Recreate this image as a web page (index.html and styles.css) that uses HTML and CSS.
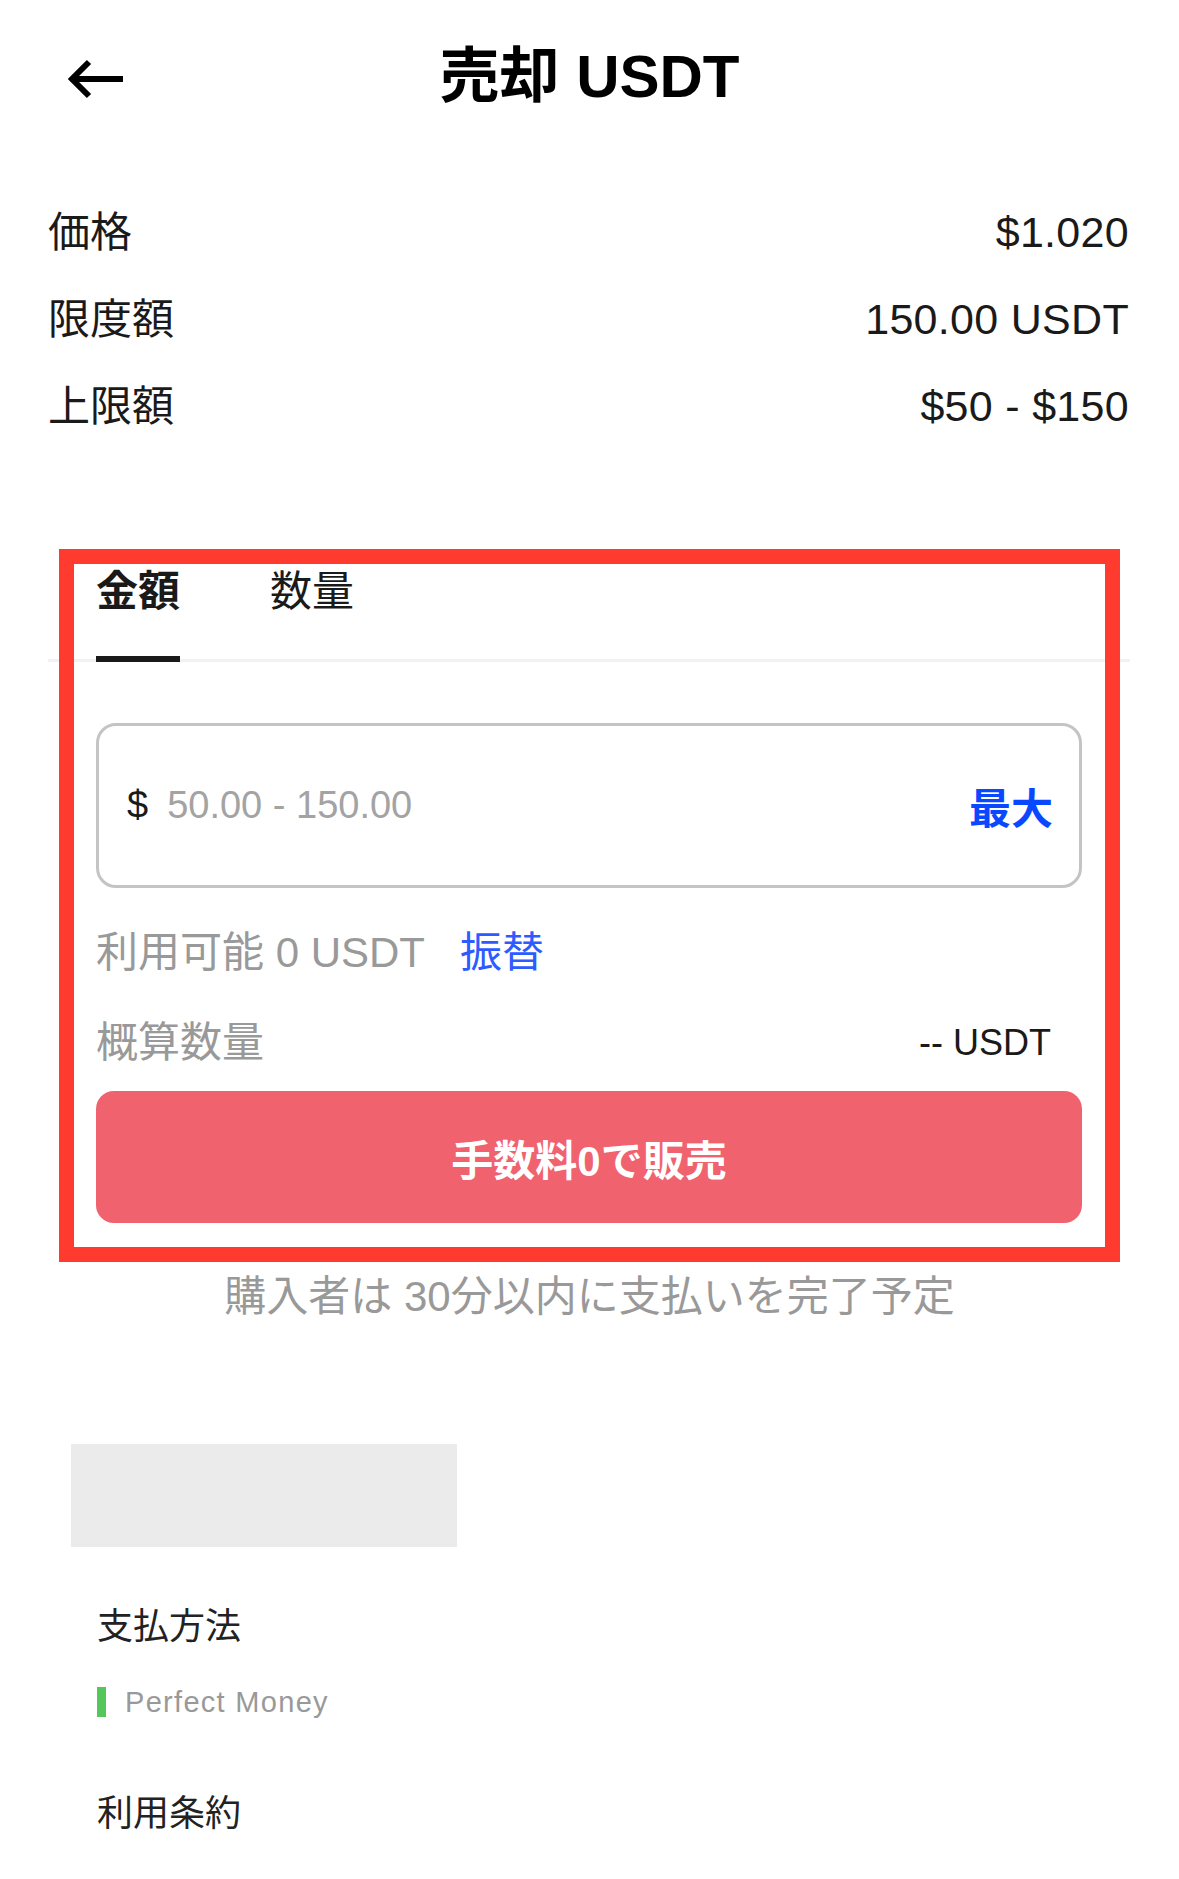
FILE: index.html
```html
<!DOCTYPE html>
<html lang="ja">
<head>
  <meta charset="UTF-8">
  <meta name="viewport" content="width=device-width, initial-scale=1.0">
  <title>売却 USDT</title>
  <link rel="stylesheet" href="styles.css">
</head>
<body>
  <header class="top-bar">
    <a class="back" href="#" aria-label="戻る">
      <svg width="62" height="40" viewBox="0 0 62 40">
        <path d="M8 20 H59 M25 3 L8 20 L25 37" fill="none" stroke="#000" stroke-width="6"/>
      </svg>
    </a>
    <h1 class="title">売却 USDT</h1>
  </header>

  <div class="info">
    <div class="info-row"><span>価格</span><span class="value">$1.020</span></div>
    <div class="info-row"><span>限度額</span><span class="value">150.00 USDT</span></div>
    <div class="info-row"><span>上限額</span><span class="value">$50 - $150</span></div>
  </div>

  <section class="trade">
    <div class="tabs">
      <div class="tab active">金額</div>
      <div class="tab">数量</div>
    </div>

    <div class="amount-box">
      <span class="currency">$</span>
      <span class="placeholder">50.00 - 150.00</span>
      <a class="max" href="#">最大</a>
    </div>

    <div class="balance">
      利用可能 0 USDT <a class="transfer" href="#">振替</a>
    </div>

    <div class="estimate">
      <span>概算数量</span>
      <span class="estimate-value">-- USDT</span>
    </div>

    <button class="sell-btn">手数料0で販売</button>
  </section>

  <p class="note">購入者は 30分以内に支払いを完了予定</p>

  <div class="avatar-placeholder"></div>

  <div class="details">
    <h2 class="detail-title">支払方法</h2>
    <div class="method"><span class="method-bar"></span>Perfect Money</div>
    <h2 class="detail-title terms">利用条約</h2>
  </div>
</body>
</html>
```

FILE: styles.css
```css
body {
  margin: 0;
  font-family: "Liberation Sans", "Noto Sans CJK JP", sans-serif;
  color: #1a1a1a;
  background: #fff;
}
a {
  text-decoration: none;
}

.top-bar {
  display: grid;
  grid-template-columns: 1fr auto 1fr;
  align-items: center;
  height: 154px;
}
.back {
  display: flex;
  padding-left: 64px;
  margin-top: 4px;
}
.title {
  margin: 0;
  font-size: 60px;
  font-weight: 700;
  color: #000;
  line-height: 70px;
}

.info {
  padding: 35px 50px 0 48px;
}
.info-row {
  display: flex;
  justify-content: space-between;
  font-size: 42px;
  line-height: 87px;
}
.value {
  font-size: 43px;
  letter-spacing: 0.3px;
}

.trade {
  position: relative;
  margin: 114px 49px 0 48px;
  padding-bottom: 24px;
}
.trade::after {
  content: "";
  position: absolute;
  top: -15px;
  bottom: -15px;
  left: 11px;
  right: 10px;
  border: 15px solid #ff3b30;
  pointer-events: none;
}
.tabs {
  display: flex;
  gap: 90px;
  padding-left: 48px;
  border-bottom: 3px solid #f2f2f5;
}
.tab {
  font-size: 42px;
  line-height: 56px;
  padding-bottom: 36px;
  border-bottom: 6px solid transparent;
  margin-bottom: -3px;
}
.tab.active {
  font-weight: 700;
  border-bottom-color: #1a1a1a;
}

.amount-box {
  display: flex;
  align-items: center;
  box-sizing: border-box;
  height: 165px;
  margin: 61px 48px 0;
  padding: 0 26px 0 28px;
  border: 3px solid #c4c4c4;
  border-radius: 20px;
}
.currency {
  font-size: 38px;
  margin-right: 19px;
}
.placeholder {
  font-size: 38px;
  color: #a3a3a3;
}
.max {
  margin-left: auto;
  font-size: 42px;
  font-weight: 700;
  color: #0a48ff;
}

.balance {
  margin: 35px 48px 0;
  font-size: 42px;
  line-height: 60px;
  color: #999;
}
.transfer {
  margin-left: 24px;
  color: #2e5bff;
}

.estimate {
  display: flex;
  justify-content: space-between;
  align-items: center;
  margin: 30px 48px 0;
  padding-right: 31px;
  line-height: 60px;
  font-size: 42px;
  color: #999;
}
.estimate-value {
  font-size: 36px;
  color: #1a1a1a;
}

.sell-btn {
  display: block;
  box-sizing: border-box;
  width: calc(100% - 96px);
  height: 132px;
  margin: 18px 48px 0;
  border: none;
  border-radius: 18px;
  background: #f0626e;
  color: #fff;
  font-family: inherit;
  font-size: 42px;
  font-weight: 700;
}

.note {
  margin: 20px 0 0;
  text-align: center;
  font-size: 42px;
  line-height: 60px;
  color: #999;
}

.avatar-placeholder {
  width: 386px;
  height: 103px;
  margin: 117px 0 0 71px;
  background: #ebebeb;
}

.details {
  padding-left: 97px;
}
.detail-title {
  margin: 55px 0 0;
  font-size: 36px;
  font-weight: 400;
  line-height: 50px;
  color: #222;
}
.detail-title.terms {
  margin-top: 62px;
}
.method {
  display: flex;
  align-items: center;
  margin-top: 25px;
  font-size: 29px;
  letter-spacing: 1.3px;
  line-height: 50px;
  color: #999;
}
.method-bar {
  width: 9px;
  height: 30px;
  margin-right: 19px;
  background: #55c65a;
}
```
